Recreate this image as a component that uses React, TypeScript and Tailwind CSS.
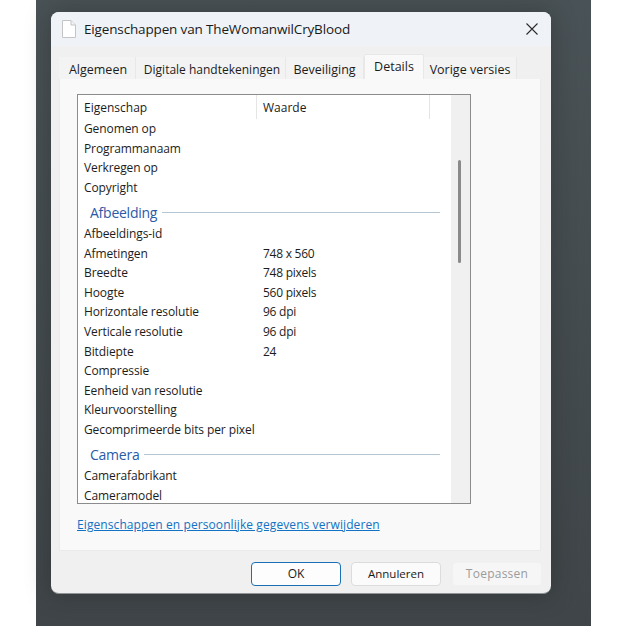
const font = "font-['Open_Sans',sans-serif]";

type Row = { name: string; value?: string } | { group: string };

const rows: Row[] = [
  { name: "Genomen op" },
  { name: "Programmanaam" },
  { name: "Verkregen op" },
  { name: "Copyright" },
  { group: "Afbeelding" },
  { name: "Afbeeldings-id" },
  { name: "Afmetingen", value: "748 x 560" },
  { name: "Breedte", value: "748 pixels" },
  { name: "Hoogte", value: "560 pixels" },
  { name: "Horizontale resolutie", value: "96 dpi" },
  { name: "Verticale resolutie", value: "96 dpi" },
  { name: "Bitdiepte", value: "24" },
  { name: "Compressie" },
  { name: "Eenheid van resolutie" },
  { name: "Kleurvoorstelling" },
  { name: "Gecomprimeerde bits per pixel" },
  { group: "Camera" },
  { name: "Camerafabrikant" },
  { name: "Cameramodel" },
];

function FileIcon() {
  return (
    <svg width="16" height="20" viewBox="0 0 16 20" fill="none">
      <path d="M1.5 1.5h8.5l4.5 4.5v12.5h-13z" fill="#fff" stroke="#c4c4c4" />
      <path d="M10 1.5v4.5h4.5" fill="#f2f2f2" stroke="#c4c4c4" />
    </svg>
  );
}

function CloseIcon() {
  return (
    <svg width="12" height="12" viewBox="0 0 12 12" fill="none" stroke="#2b2b2b" strokeWidth="1.1">
      <path d="M0.5 0.5l11 11M11.5 0.5l-11 11" />
    </svg>
  );
}

function Tab({ label, className, active }: { label: string; className: string; active?: boolean }) {
  if (active) {
    return (
      <div className={`h-[25px] bg-[#f9f9f9] border border-b-0 border-[#e8e8e8] rounded-t-[2px] text-center leading-[24px] text-[#1c1c1c] ${className}`}>
        {label}
      </div>
    );
  }
  return (
    <div className={`h-[22px] bg-[#f3f3f3] border-r border-[#e8e8e8] text-center leading-[26px] text-[#1c1c1c] ${className}`}>
      {label}
    </div>
  );
}

function Button({ label, className }: { label: string; className: string }) {
  return (
    <div className={`w-[90px] h-[24px] rounded-[4px] border text-center leading-[22px] ${className}`}>
      {label}
    </div>
  );
}

export default function App() {
  return (
    <div className={`w-[626px] h-[626px] bg-white pl-[36px] ${font}`}>
      <div className="w-[555px] h-[626px] pt-[12px] pl-[15px] bg-gradient-to-b from-[#495256] to-[#3f4548]">
        <div className="w-[500px] h-[582px] flex flex-col rounded-[8px] bg-[#f0f0f0] border-b border-[#8f9496] shadow-[0_0_24px_rgba(30,30,30,0.35)] overflow-hidden">
          {/* Title bar */}
          <div className="h-[34px] flex items-center pl-[10px] pr-[13px] bg-[#eff3f7]">
            <FileIcon />
            <span className="ml-[7px] text-[13.5px] tracking-[-0.15px] text-[#1a1a1a]">
              Eigenschappen van TheWomanwilCryBlood
            </span>
            <div className="ml-auto flex">
              <CloseIcon />
            </div>
          </div>

          {/* Tabs */}
          <div className="h-[33px] pl-[8px] flex items-end">
            <Tab label="Algemeen" className="w-[77px] pl-[2px] text-[12.5px]" />
            <Tab label="Digitale handtekeningen" className="w-[150px] pl-[3px] text-[12px]" />
            <Tab label="Beveiliging" className="w-[78px] text-[12.5px]" />
            <Tab label="Details" className="w-[60px] text-[12.5px]" active />
            <Tab label="Vorige versies" className="w-[93px] text-[12.5px]" />
          </div>

          {/* Panel */}
          <div className="ml-[8px] w-[482px] h-[472px] bg-[#f9f9f9] border border-t-0 border-[#ebebeb] pl-[17px] pt-[15px]">
            <div className="w-[394px] h-[410px] bg-white border border-[#8c8c8c] flex overflow-hidden">
              <div className="w-[373px] flex flex-col text-[12px] text-[#1c1c1c]">
                <div className="h-[24px] shrink-0 flex">
                  <div className="w-[179px] pl-[6px] leading-[25px] border-r border-[#e5e5e5]">Eigenschap</div>
                  <div className="w-[173px] pl-[6px] leading-[25px] border-r border-[#e5e5e5]">Waarde</div>
                </div>
                {rows.map((row) =>
                  "group" in row ? (
                    <div key={row.group} className="h-[26.6px] shrink-0 flex items-center pl-[12px] pt-[3px] pr-[11px]">
                      <span className="text-[14px] tracking-[-0.25px] text-[#2a5aa8]">{row.group}</span>
                      <div className="ml-[5px] flex-1 h-px bg-[#b4c6d4]" />
                    </div>
                  ) : (
                    <div key={row.name} className="h-[19.6px] shrink-0 flex items-center leading-[19.6px]">
                      <div className="w-[179px] pl-[6px] whitespace-nowrap tracking-[-0.1px]">{row.name}</div>
                      <div className="pl-[6px] tracking-[-0.25px]">{row.value}</div>
                    </div>
                  )
                )}
              </div>
              {/* Scrollbar */}
              <div className="w-[19px] bg-[#f0f0f0] pt-[65px] pl-[7px]">
                <div className="w-[3px] h-[103px] rounded-full bg-[#8a8a8a]" />
              </div>
            </div>
            <div className="mt-[13px] text-[12px] leading-[16px] text-[#1272c4] underline tracking-[0.09px]">
              Eigenschappen en persoonlijke gegevens verwijderen
            </div>
          </div>

          {/* Footer */}
          <div className="flex-1 flex gap-[10px] pl-[200px] pt-[11px]">
            <Button label="OK" className="text-[12px] bg-[#fdfdfd] border-[#1a6fb5] text-[#1a1a1a]" />
            <Button label="Annuleren" className="text-[11.5px] bg-[#fbfbfb] border-[#dcdcdc] text-[#1a1a1a]" />
            <Button label="Toepassen" className="ml-[1px] text-[12px] tracking-[0.25px] bg-[#f6f6f6] border-[#f0f0f0] text-[#9b9b9b]" />
          </div>
        </div>
      </div>
    </div>
  );
}
